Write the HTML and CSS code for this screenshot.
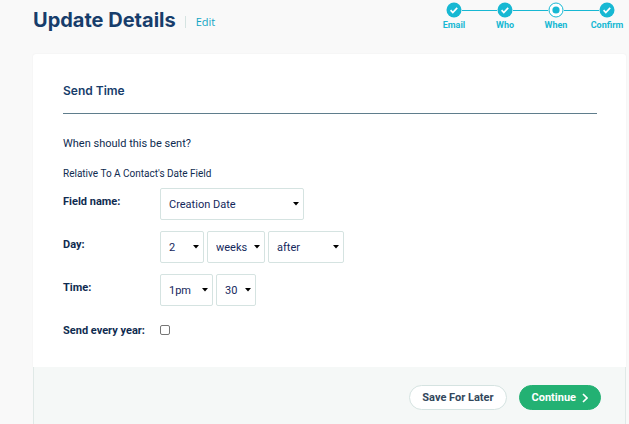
FILE: index.html
```html
<!DOCTYPE html>
<html lang="en">
<head>
    <meta charset="utf-8">
    <title>Update Details</title>
    <link rel="stylesheet" href="styles.css">
</head>
<body>
    <header class="page-header">
        <div class="title-bar">
            <h1>Update Details</h1>
            <a class="edit-link" href="#">Edit</a>
        </div>
        <ol class="steps">
            <li>
                <svg viewBox="0 0 16 16"><circle cx="8" cy="8" r="7.5" fill="#17b8d3"/><path d="M4.6 8.2l2.2 2.3 4.4-4.6" fill="none" stroke="#fff" stroke-width="1.7"/></svg>
                <span>Email</span>
            </li>
            <li>
                <svg viewBox="0 0 16 16"><circle cx="8" cy="8" r="7.5" fill="#17b8d3"/><path d="M4.6 8.2l2.2 2.3 4.4-4.6" fill="none" stroke="#fff" stroke-width="1.7"/></svg>
                <span>Who</span>
            </li>
            <li>
                <svg viewBox="0 0 16 16"><circle cx="8" cy="8" r="7" fill="#fff" stroke="#17b8d3"/><circle cx="8" cy="8" r="3.6" fill="#17b8d3"/></svg>
                <span>When</span>
            </li>
            <li>
                <svg viewBox="0 0 16 16"><circle cx="8" cy="8" r="7.5" fill="#17b8d3"/><path d="M4.6 8.2l2.2 2.3 4.4-4.6" fill="none" stroke="#fff" stroke-width="1.7"/></svg>
                <span>Confirm</span>
            </li>
        </ol>
    </header>

    <form class="panel">
        <div class="panel-body">
            <h2>Send Time</h2>
            <p class="question">When should this be sent?</p>
            <p class="subtitle">Relative To A Contact's Date Field</p>

            <div class="row">
                <label for="fieldName">Field name:</label>
                <select id="fieldName" class="field-select">
                    <option>Creation Date</option>
                </select>
            </div>
            <div class="row">
                <label for="dayCount">Day:</label>
                <select id="dayCount" class="count-select">
                    <option>2</option>
                </select>
                <select class="unit-select" aria-label="Unit">
                    <option>weeks</option>
                </select>
                <select class="when-select" aria-label="Before or after">
                    <option>after</option>
                </select>
            </div>
            <div class="row">
                <label for="hour">Time:</label>
                <select id="hour" class="hour-select">
                    <option>1pm</option>
                </select>
                <select class="minute-select" aria-label="Minutes">
                    <option>30</option>
                </select>
            </div>
            <div class="row">
                <label for="everyYear">Send every year:</label>
                <input type="checkbox" id="everyYear">
            </div>
        </div>

        <div class="panel-footer">
            <button type="button" class="btn btn-save">Save For Later</button>
            <button type="submit" class="btn btn-continue">
                Continue
                <svg viewBox="0 0 6 10"><path d="M1 1l4 4-4 4" fill="none" stroke="#fff" stroke-width="1.6"/></svg>
            </button>
        </div>
    </form>
</body>
</html>
```
FILE: styles.css
```css
* {
    box-sizing: border-box;
}

body {
    font-family: Roboto, sans-serif;
    font-size: 11px;
    line-height: 16px;
    color: #0f2b50;
    margin: 0;
    padding: 0 3px 0 33px;
    min-height: 100vh;
    display: flex;
    flex-direction: column;
    background-color: #f9f9f9;
}

.page-header {
    display: flex;
    justify-content: space-between;
    align-items: flex-start;
    height: 54px;
    padding-right: 2px;
}

.title-bar {
    display: flex;
    align-items: flex-end;
    padding-top: 8px;
}

h1 {
    font-family: Inter, sans-serif;
    font-size: 20px;
    line-height: 24px;
    font-weight: bold;
    color: #173d6b;
    margin: 0;
}

.edit-link {
    font-family: "Open Sans", sans-serif;
    font-size: 11px;
    line-height: 12px;
    color: #12a5c4;
    text-decoration: none;
    margin: 0 0 4px 9px;
    padding-left: 10px;
    border-left: 1px solid #d5e3e1;
}

.steps {
    display: flex;
    gap: 17px;
    list-style: none;
    margin: 0;
    padding: 2px 0 0;
}

.steps li {
    position: relative;
    width: 34px;
    display: flex;
    flex-direction: column;
    align-items: center;
    font-size: 9px;
    font-weight: bold;
    line-height: 14px;
    color: #17b8d3;
}

.steps svg {
    width: 16px;
    height: 16px;
}

/* line joining a step to the next one */
.steps li:not(:last-child)::after {
    content: "";
    position: absolute;
    left: 25px;
    top: 8px;
    width: 35px;
    height: 1px;
    background-color: #17b8d3;
}

.panel {
    flex: 1;
    display: flex;
    flex-direction: column;
}

.panel-body {
    background-color: #fff;
    border-radius: 3px 3px 0 0;
    box-shadow: 0 0 2px rgba(0, 0, 0, 0.06);
    padding: 28px 29px 24px 30px;
}

h2 {
    font-family: Inter, sans-serif;
    font-size: 12px;
    line-height: 18px;
    font-weight: 600;
    color: #173d6b;
    margin: 0 0 22px;
    padding-bottom: 13px;
    border-bottom: 1px solid #5f7d8c;
}

.question {
    margin: 0 0 14px;
}

.subtitle {
    font-size: 10px;
    margin: 0 0 6px;
}

.row {
    display: flex;
    align-items: flex-start;
    min-height: 26px;
    gap: 3px;
    margin-bottom: 11px;
}

.row:last-child {
    margin-bottom: 0;
}

.row label {
    width: 94px;
    padding-top: 6px;
    font-weight: bold;
    white-space: nowrap;
}

select {
    appearance: none;
    height: 32px;
    padding: 0 8px;
    font-family: inherit;
    font-size: 11px;
    color: #14285c;
    border: 1px solid #d5e3e1;
    border-radius: 2px;
    background: #fff url("data:image/svg+xml,%3Csvg xmlns='http://www.w3.org/2000/svg' width='6' height='4'%3E%3Cpath d='M0 0h6L3 3.5z'/%3E%3C/svg%3E") no-repeat right 4px center;
}

.field-select {
    width: 144px;
}

.count-select {
    width: 44px;
}

.unit-select {
    width: 58px;
}

.when-select {
    width: 76px;
}

.hour-select {
    width: 53px;
}

.minute-select {
    width: 40px;
}

input[type="checkbox"] {
    appearance: none;
    width: 10px;
    height: 10px;
    margin: 8px 0 0;
    border: 1px solid #767676;
    border-radius: 2px;
    background-color: #fff;
}

input[type="checkbox"]:checked {
    background-color: #17b8d3;
}

.panel-footer {
    flex: 1;
    display: flex;
    justify-content: flex-end;
    align-items: flex-start;
    gap: 12px;
    padding: 18px 24px 14px;
    background-color: #f5f8f7;
    border: 1px solid #e0e9e7;
    border-width: 0 1px;
}

.btn {
    height: 25px;
    padding: 0 12px;
    font-family: inherit;
    font-size: 11px;
    font-weight: bold;
    border-radius: 13px;
    cursor: pointer;
}

.btn-save {
    color: #33475b;
    background-color: #fff;
    border: 1px solid #d5e3e1;
}

.btn-continue {
    display: flex;
    align-items: center;
    gap: 6px;
    color: #fff;
    background-color: #23b173;
    border: 1px solid #23b173;
}

.btn-continue svg {
    width: 6px;
    height: 10px;
}
```
